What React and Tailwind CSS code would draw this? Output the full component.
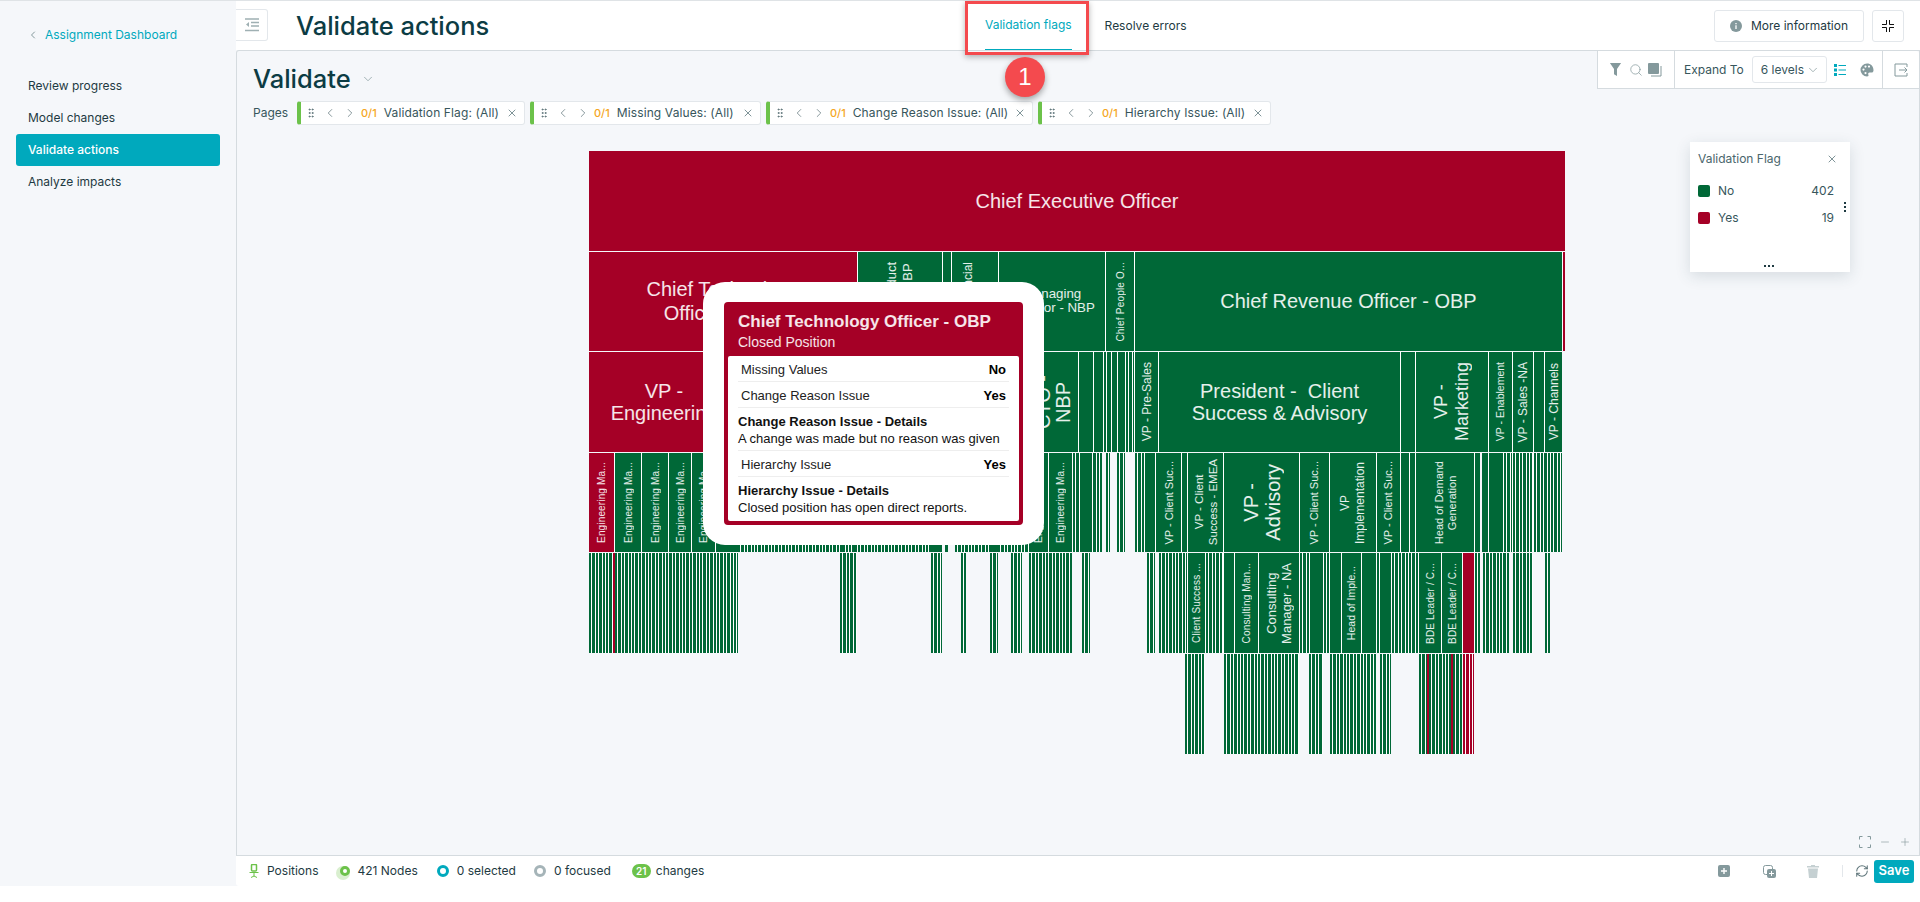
import { ChevronDown, ChevronLeft, ChevronRight, GripVertical, Minus, Plus, RefreshCw, Search, X } from "lucide-react";

const CHIPS = [
  { label: "Validation Flag: (All)", w: "w-[228px]" },
  { label: "Missing Values: (All)", w: "w-[231px]" },
  { label: "Change Reason Issue: (All)", w: "w-[267px]" },
  { label: "Hierarchy Issue: (All)", w: "w-[233px]" },
];

const FILL = {
  r: "bg-[#a50026]",
  g: "bg-[#006837]",
  gs: "bg-[repeating-linear-gradient(90deg,#006837_0,#006837_2.4px,#fff_2.4px,#fff_3.4px)]",
  rs: "bg-[repeating-linear-gradient(90deg,#a50026_0,#a50026_2.4px,#fff_2.4px,#fff_3.4px)]",
};

const SMALL = "text-[10px] tracking-[0.15px]";

// treemap cells: [start x, end x, fill, label lines, text classes, rotated]
const EM = ["Engineering Ma..."];
const ROWS = [
  [[589, 1565, "r", ["Chief Executive Officer"], "text-[20px]"]],
  [
    [589, 857, "r", ["Chief Technology", "Officer - OBP"], "text-[20px] leading-[24px]"],
    [858, 942, "g", ["Chief Product", "Officer - NBP"], "text-[13px] leading-[16px]", true],
    [943, 951, "g"],
    [952, 998, "g", ["Chief Financial", "Officer"], "text-[12px] leading-[14px]", true],
    [999, 1105, "g", ["Managing", "Director - NBP"], "text-[13.3px] leading-[14px] pb-[1px]"],
    [1106, 1134, "g", ["Chief People O..."], "text-[10px] tracking-[0.2px]", true],
    [1135, 1562, "g", ["Chief Revenue Officer - OBP"], "text-[20px]"],
    [1563, 1565, "r"],
  ],
  [
    [589, 739, "r", ["VP -", "Engineering"], "text-[20px] leading-[22px]"],
    [740, 1027, "g"],
    [1028, 1078, "g", ["CTO -", "NBP"], "text-[20px] leading-[20px]", true],
    [1079, 1093, "g"],
    [1094, 1103, "g"],
    [1104, 1106, "g"],
    [1107, 1111, "g"],
    [1112, 1117, "g"],
    [1118, 1125, "g"],
    [1126, 1128, "g"],
    [1129, 1132, "g"],
    [1133, 1134, "g"],
    [1135, 1158, "g", ["VP - Pre-Sales"], "text-[12px]", true],
    [1159, 1400, "g", ["President -  Client", "Success & Advisory"], "text-[20px] leading-[22px] whitespace-pre"],
    [1401, 1415, "g"],
    [1416, 1488, "g", ["VP -", "Marketing"], "text-[18px] leading-[21px]", true],
    [1489, 1512, "g", ["VP - Enablement"], "text-[10.5px]", true],
    [1513, 1533, "g", ["VP - Sales -NA"], "text-[12px]", true],
    [1534, 1544, "g"],
    [1545, 1562, "g", ["VP - Channels"], "text-[12px]", true],
  ],
  [
    [589, 614, "r", EM, SMALL, true],
    [615, 641, "g", EM, SMALL, true],
    [642, 668, "g", EM, SMALL, true],
    [669, 691, "g", EM, SMALL, true],
    [692, 715, "g", EM, SMALL, true],
    [716, 738, "g"],
    [738, 840, "gs"],
    [840, 845, "g"],
    [846, 851, "gs"],
    [852, 857, "g"],
    [858, 931, "gs"],
    [931, 942, "g"],
    [945, 948, "g"],
    [955, 990, "gs"],
    [990, 998, "g"],
    [998, 1028, "gs"],
    [1029, 1048, "g", EM, SMALL, true],
    [1049, 1072, "g", EM, SMALL, true],
    [1073, 1082, "gs"],
    [1082, 1090, "g"],
    [1090, 1102, "gs"],
    [1106, 1110, "gs"],
    [1117, 1125, "gs"],
    [1135, 1147, "gs"],
    [1147, 1155, "g"],
    [1156, 1158, "g"],
    [1158, 1181, "g", ["VP - Client Suc..."], "text-[11px]", true],
    [1182, 1187, "g"],
    [1188, 1223, "g", ["VP - Client", "Success - EMEA"], "text-[11.5px] leading-[14px]", true],
    [1224, 1299, "g", ["VP -", "Advisory"], "text-[20px] leading-[22px]", true],
    [1300, 1329, "g", ["VP - Client Suc..."], "text-[11px]", true],
    [1330, 1376, "g", ["VP", "Implementation"], "text-[12px] leading-[15px]", true],
    [1377, 1400, "g", ["VP - Client Suc..."], "text-[11px]", true],
    [1401, 1409, "g"],
    [1410, 1415, "g"],
    [1416, 1474, "g", ["Head of Demand", "Generation"], "text-[11px] leading-[12.5px]", true],
    [1475, 1480, "g"],
    [1482, 1488, "g"],
    [1489, 1503, "g"],
    [1504, 1512, "gs"],
    [1513, 1533, "gs"],
    [1534, 1562, "gs"],
  ],
  [
    [589, 613, "gs"],
    [613, 615, "r"],
    [615, 738, "gs"],
    [840, 857, "gs"],
    [931, 942, "gs"],
    [961, 966, "gs"],
    [990, 998, "gs"],
    [1011, 1022, "gs"],
    [1029, 1072, "gs"],
    [1082, 1090, "gs"],
    [1147, 1155, "gs"],
    [1159, 1187, "gs"],
    [1188, 1205, "g", ["Client Success ..."], SMALL, true],
    [1206, 1223, "gs"],
    [1224, 1234, "g"],
    [1235, 1258, "g", ["Consulting Man..."], SMALL, true],
    [1259, 1299, "g", ["Consulting", "Manager - NA"], "text-[13px] leading-[15px]", true],
    [1300, 1309, "gs"],
    [1310, 1323, "g"],
    [1324, 1329, "gs"],
    [1330, 1341, "g"],
    [1342, 1361, "g", ["Head of Imple..."], "text-[10.5px]", true],
    [1362, 1376, "g"],
    [1377, 1379, "g"],
    [1380, 1391, "g"],
    [1392, 1418, "gs"],
    [1419, 1441, "g", ["BDE Leader / C..."], SMALL, true],
    [1442, 1462, "g", ["BDE Leader / C..."], SMALL, true],
    [1463, 1474, "r"],
    [1475, 1480, "gs"],
    [1483, 1509, "gs"],
    [1513, 1533, "gs"],
    [1545, 1550, "gs"],
  ],
  [
    [1185, 1205, "gs"],
    [1224, 1299, "gs"],
    [1309, 1323, "gs"],
    [1330, 1376, "gs"],
    [1380, 1391, "gs"],
    [1419, 1427, "gs"],
    [1427, 1429, "r"],
    [1429, 1451, "gs"],
    [1451, 1453, "r"],
    [1453, 1463, "gs"],
    [1463, 1474, "rs"],
  ],
];

function TreeCell({ cell }) {
  const [start, end, fill, lines, text, rotated] = cell;
  return (
    <div
      className={`${FILL[fill]} flex shrink-0 items-center justify-center overflow-hidden text-center whitespace-nowrap text-white/90`}
      style={{ width: end - start }}
    >
      {lines && (
        <div className={`${text} ${rotated ? "[writing-mode:vertical-rl] rotate-180" : ""}`}>
          {lines.map((l) => (
            <div key={l}>{l}</div>
          ))}
        </div>
      )}
    </div>
  );
}

function TreeRow({ cells }) {
  let x = 589;
  return (
    <div className="flex h-[99.6px]">
      {cells.map((cell) => {
        const gap = cell[0] - x;
        x = cell[1];
        return (
          <div className="contents" key={cell[0]}>
            {gap > 0 && <div className={`shrink-0 ${gap === 1 ? "bg-white" : ""}`} style={{ width: gap }} />}
            <TreeCell cell={cell} />
          </div>
        );
      })}
    </div>
  );
}

function Chip({ label, w }) {
  return (
    <div className={`${w} flex h-6 items-center rounded-[3px] border border-l-4 border-[#e3e7eb] border-l-[#6cc24a] bg-white pl-[4px] text-[#37565c]`}>
      <GripVertical className="h-3 w-3 text-[#5c7378]" />
      <ChevronLeft className="ml-[6px] h-3.5 w-3.5 text-[#5c7378]" strokeWidth={1.25} />
      <ChevronRight className="ml-[6px] h-3.5 w-3.5 text-[#5c7378]" strokeWidth={1.25} />
      <span className="ml-[4px] text-[11px] font-medium text-[#f5a623]">0/1</span>
      <span className="ml-[7px] text-[12px] tracking-[0.12px] whitespace-nowrap">{label}</span>
      <X className="ml-auto mr-[6px] h-3 w-3 text-[#7f9498]" />
    </div>
  );
}

function TipRow({ label, value }) {
  return (
    <div className="flex h-[26px] items-center justify-between border-b border-[#eeeeee] px-[3px] pt-[2px] text-[13px] text-[#222]">
      <span>{label}</span>
      <b className="text-black">{value}</b>
    </div>
  );
}

function TipDetail({ title, body, last }) {
  return (
    <div className={`flex h-[43px] flex-col justify-center pt-[1px] text-[13px] leading-[17px] text-[#111] ${last ? "" : "border-b border-[#eeeeee]"}`}>
      <b>{title}</b>
      <span>{body}</span>
    </div>
  );
}

function Tooltip() {
  return (
    <div className="absolute left-[466px] top-[231px] h-[263px] w-[341px] rounded-[22px] bg-white px-[21px] pt-[20px] font-['Liberation_Sans',sans-serif]">
      <div className="h-[223px] rounded-[4px] bg-[#a50026] px-1 pb-1">
        <div className="h-[54px] px-[10px] pt-[10px] text-white/90">
          <div className="text-[17px] leading-[20px] font-bold whitespace-nowrap">Chief Technology Officer - OBP</div>
          <div className="text-[14px] leading-[20px]">Closed Position</div>
        </div>
        <div className="h-[165px] rounded-[2px] bg-white px-[10px]">
          <TipRow label="Missing Values" value="No" />
          <TipRow label="Change Reason Issue" value="Yes" />
          <TipDetail title="Change Reason Issue - Details" body="A change was made but no reason was given" />
          <TipRow label="Hierarchy Issue" value="Yes" />
          <TipDetail title="Hierarchy Issue - Details" body="Closed position has open direct reports." last />
        </div>
      </div>
    </div>
  );
}

function Legend() {
  return (
    <div className="absolute left-[1453px] top-[91px] h-[130px] w-[160px] bg-white shadow-[0_4px_14px_rgba(40,70,80,0.15)]">
      <div className="flex h-[32px] items-center justify-between pl-2 pr-3 pt-[1px] text-[12px] text-[#4a666c]">
        <span>Validation Flag</span>
        <X className="h-3 w-3 text-[#7f9498]" />
      </div>
      <div className="mt-[4px] flex h-[26px] items-center pl-2 pr-4 text-[12px] text-[#37565c]">
        <span className="h-3 w-3 rounded-[2px] bg-[#006837]" />
        <span className="ml-2">No</span>
        <span className="ml-auto">402</span>
      </div>
      <div className="flex h-[27px] items-center pl-2 pr-4 text-[12px] text-[#37565c]">
        <span className="h-3 w-3 rounded-[2px] bg-[#a50026]" />
        <span className="ml-2">Yes</span>
        <span className="ml-auto">19</span>
      </div>
      <div className="absolute right-1 top-[60px] flex flex-col gap-[2px]">
        <span className="h-[2px] w-[2px] bg-[#1e3a42]" />
        <span className="h-[2px] w-[2px] bg-[#1e3a42]" />
        <span className="h-[2px] w-[2px] bg-[#1e3a42]" />
      </div>
      <div className="absolute bottom-[5px] left-[74px] flex gap-[2px]">
        <span className="h-[2px] w-[2px] bg-[#1e3a42]" />
        <span className="h-[2px] w-[2px] bg-[#1e3a42]" />
        <span className="h-[2px] w-[2px] bg-[#1e3a42]" />
      </div>
    </div>
  );
}

function Toolbar() {
  return (
    <div className="flex h-[38px] items-center self-start rounded-tr-[3px] border-b border-l border-[#d5dbdf] bg-white text-[#37565c]">
      <div className="flex h-full w-[77px] items-center border-r border-[#d5dbdf] pl-[11px]">
        <svg viewBox="0 0 14 16" className="h-[15px] w-[13px] fill-[#84999c]"><path d="M1 1h12L8.6 7.5V15L5.4 13V7.5z" /></svg>
        <Search className="ml-[7px] h-[14px] w-[14px] text-[#84999c]" strokeWidth={1.25} />
        <svg viewBox="0 0 14 14" className="ml-[5px] h-[14px] w-[14px]"><rect x="0" y="0" width="11" height="11" rx="1" fill="#84999c" /><path d="M13 3v10H3" fill="none" stroke="#84999c" /></svg>
      </div>
      <div className="flex h-full w-[208px] items-center border-r border-[#d5dbdf] pl-[9px]">
        <span className="text-[12px] whitespace-nowrap">Expand To</span>
        <div className="ml-2 flex h-[27px] w-[75px] items-center justify-between rounded-[3px] border border-[#e3e7eb] pl-2 pr-[6px] text-[12px]">
          <span className="whitespace-nowrap">6 levels</span>
          <ChevronDown className="h-3.5 w-3.5 text-[#84999c]" strokeWidth={1.25} />
        </div>
        <svg viewBox="0 0 12 12" className="ml-[7px] h-3 w-3 fill-[#00a9bd]"><path d="M0 0h3v3H0zM0 4.5h3v3H0zM0 9h3v3H0zM4.500 1h7.500v1H4.500zM4.500 5.500h7.500v1H4.500zM4.500 10h7.500v1H4.500z" /></svg>
        <svg viewBox="0 0 14 14" className="ml-[14px] h-[14px] w-[14px]"><path fillRule="evenodd" fill="#84999c" d="M7 .5a6.500 6.500 0 1 0 0 13c1.500 0 1.800-1 1.300-2-.5-1 .2-2 1.300-2h1.900c1.200 0 2-.9 2-2.300C13.500 3.200 10.600.5 7 .5zM3.500 5.500a1.100 1.100 0 1 1 0 2.200 1.100 1.100 0 0 1 0-2.200zM5.500 2.500a1.100 1.100 0 1 1 0 2.200 1.100 1.100 0 0 1 0-2.200zM9 2.500a1.100 1.100 0 1 1 0 2.200 1.100 1.100 0 0 1 0-2.200zM5.500 9a1.100 1.100 0 1 1 0 2.200 1.100 1.100 0 0 1 0-2.200z" /></svg>
      </div>
      <div className="flex h-full w-[36px] items-center justify-center">
        <svg viewBox="0 0 14 14" className="h-[14px] w-[14px] fill-none stroke-[#84999c]"><path d="M13 4V1H1v12h12v-3M5 7h8M10.500 4.500 13 7l-2.500 2.500" /></svg>
      </div>
    </div>
  );
}

function StatusBar() {
  return (
    <div className="flex h-[31px] shrink-0 items-center rounded-bl-[3px] border-t border-[#d5dbdf] bg-white pl-[13px] text-[12px] text-[#1e3a42]">
      <svg viewBox="0 0 10 14" className="h-[14px] w-[10px] fill-none stroke-[#6cc24a]">
        <rect x="2.500" y="0.500" width="5" height="6.500" fill="none" rx="1" strokeWidth="1.500" />
        <path d="M0.500 8.500h9M5 8.500v4M2 13.500 5 12l3 1.500" />
      </svg>
      <span className="ml-2">Positions</span>
      <span className="relative ml-[21px] flex h-[10px] w-[10px] rounded-full border-[3px] border-[#6cc24a] bg-white shadow-[-2px_2px_0_2px_#d9efcf]" />
      <span className="ml-2">421 Nodes</span>
      <span className="ml-[19px] h-3 w-3 rounded-full border-[3.5px] border-[#00a9bd] bg-white" />
      <span className="ml-2">0 selected</span>
      <span className="ml-[18px] h-3 w-3 rounded-full border-[3.5px] border-[#a5b4b8] bg-white" />
      <span className="ml-2">0 focused</span>
      <span className="ml-[21px] flex h-[14px] w-[19px] items-center justify-center rounded-full bg-[#6cc24a] text-[10px] font-semibold text-white">21</span>
      <span className="ml-[5px]">changes</span>

      <svg viewBox="0 0 12 12" className="ml-auto h-3 w-3"><rect width="12" height="12" rx="2" fill="#84999c" /><path d="M6 3v6M3 6h6" stroke="#fff" strokeWidth="1.400" /></svg>
      <svg viewBox="0 0 13 13" className="ml-[33px] h-[13px] w-[13px]"><rect x="0.500" y="0.500" width="9" height="9" rx="2" fill="none" stroke="#84999c" /><rect x="4" y="4" width="9" height="9" rx="2" fill="#84999c" /><path d="M8.500 6v5M6 8.500h5" stroke="#fff" /></svg>
      <svg viewBox="0 0 12 13" className="ml-[31px] h-[13px] w-3 fill-[#c5d0d2]"><path d="M4 0h4v1h4v1.500H0V1h4zM1 3.500h10L10 13H2z" /></svg>
      <span className="ml-[23px] h-[12px] w-px bg-[#e3e7eb]" />
      <RefreshCw className="ml-[12px] h-3.5 w-3.5 text-[#5c7378]" strokeWidth={1.75} />
      <button className="ml-[5px] mr-[6px] flex h-[23px] w-10 items-center justify-center rounded-[3px] bg-[#00a9bd] text-[13px] font-semibold text-white">Save</button>
    </div>
  );
}

export default function App() {
  return (
    <div className="relative flex h-[902px] flex-col overflow-hidden bg-white font-['Inter',sans-serif]">
      <div className="flex h-[886px] border-t border-[#dfe3e6] bg-[#f5f7fa]">
        <aside className="w-[236px] shrink-0 text-[12px] text-[#1e3a42]">
          <div className="mt-[24px] flex h-[20px] items-center pl-[27px] text-[#00a9bd]">
            <ChevronLeft className="h-3 w-3 text-[#84999c]" />
            <span className="ml-[6px]">Assignment Dashboard</span>
          </div>
          <nav className="mt-[25px] flex flex-col px-4">
            <div className="flex h-8 items-center pl-3">Review progress</div>
            <div className="flex h-8 items-center pl-3">Model changes</div>
            <div className="flex h-8 items-center rounded-[3px] bg-[#00a9bd] pl-3 font-medium text-white">Validate actions</div>
            <div className="flex h-8 items-center pl-3">Analyze impacts</div>
          </nav>
        </aside>

        <main className="flex min-w-0 flex-1 flex-col">
          <header className="flex h-[49px] shrink-0 items-start bg-white">
            <button className="mt-2 flex h-8 w-8 items-center justify-center rounded-r-[3px] border border-l-0 border-[#e3e7eb]">
              <svg viewBox="0 0 14 14" className="h-[14px] w-[14px] stroke-[#9fb0b3]" fill="none">
                <path d="M0 1h14M6 4.500h8M6 8h8M0 12.500h14" strokeWidth="1.300" />
                <path d="M4 4v5L1 6.500z" fill="#9fb0b3" stroke="none" />
              </svg>
            </button>
            <h1 className="ml-[28px] w-[689px] pt-[9px] text-[25.5px] leading-[32px] font-medium text-[#0c3c44]">Validate actions</h1>
            <div className="flex h-full items-center text-[12px]">
              <div className="flex h-full items-center border-b-[1.5px] border-[#00a9bd] text-[#00a9bd]">Validation flags</div>
              <div className="ml-[33px] text-[#1e3a42]">Resolve errors</div>
            </div>
            <div className="ml-auto mt-[9px] flex gap-2 pr-4">
              <button className="flex h-8 w-[150px] items-center justify-center rounded-[3px] border border-[#e3e7eb] text-[12px] text-[#1e3a42]">
                <svg viewBox="0 0 12 12" className="mr-[9px] h-3 w-3"><circle cx="6" cy="6" r="6" fill="#84999c" /><path d="M6 5.200v3.800M6 3v1.200" stroke="#fff" strokeWidth="1.300" /></svg>
                More information
              </button>
              <button className="flex h-8 w-8 items-center justify-center rounded-[3px] border border-[#e3e7eb]">
                <svg viewBox="0 0 12 12" className="h-3 w-3 fill-none stroke-[#111]"><path d="M4.500 0v4.500H0M7.500 0v4.500H12M4.500 12V7.500H0M7.500 12V7.500H12" /></svg>
              </button>
            </div>
          </header>

          <section className="relative flex min-h-0 flex-1 flex-col rounded-tl-[3px] border-l border-r border-t border-[#d5dbdf]">
            <div className="flex justify-between">
              <div className="pl-[16px] pt-[15px]">
                <div className="flex h-[26px] items-center">
                  <span className="text-[25.5px] font-medium text-[#0c3c44]">Validate</span>
                  <ChevronDown className="ml-[10px] h-3.5 w-3.5 text-[#84999c]" strokeWidth={1.25} />
                </div>
                <div className="mt-[9px] flex items-center gap-[5px]">
                  <span className="mr-[3px] w-[36px] text-[12px] text-[#37565c]">Pages</span>
                  {CHIPS.map((c) => (
                    <Chip key={c.label} {...c} />
                  ))}
                </div>
              </div>
              <Toolbar />
            </div>

            <div className="ml-[352px] mt-[26px] flex w-[976px] flex-col gap-px font-['Liberation_Sans',sans-serif]">
              {ROWS.map((cells, i) => (
                <TreeRow key={i} cells={cells} />
              ))}
            </div>

            <Legend />
            <Tooltip />

            <div className="absolute bottom-[7px] right-[8px] flex items-center gap-[8px] text-[#84999c]">
              <svg viewBox="0 0 12 12" className="h-3 w-3 fill-none stroke-[#84999c]"><path d="M0.500 3.500v-3h3M8.500 0.500h3v3M11.500 8.500v3h-3M3.500 11.500h-3v-3" /></svg>
              <Minus className="h-3 w-3" strokeWidth={1.25} />
              <Plus className="h-3 w-3" strokeWidth={1.25} />
            </div>
          </section>
          <StatusBar />
        </main>
      </div>

      <div className="absolute left-[965px] top-[1px] h-[54px] w-[124px] border-[3px] border-[#f44a4e] shadow-[0_2px_6px_rgba(0,0,0,0.3)]" />
      <div className="absolute left-[1005px] top-[57px] flex h-10 w-10 items-center justify-center rounded-full bg-[#f44a4e] font-['Liberation_Sans',sans-serif] text-[24px] text-white shadow-[0_3px_6px_rgba(0,0,0,0.35)]">1</div>
    </div>
  );
}
